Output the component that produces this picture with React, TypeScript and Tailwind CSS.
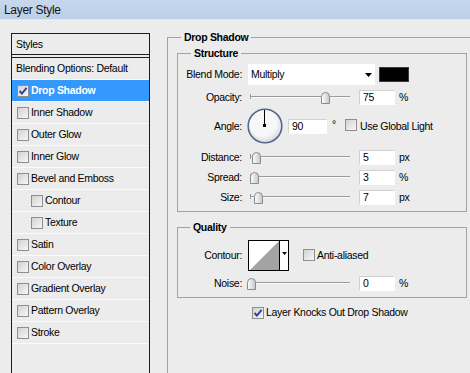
import React from 'react';

const styleRows = [
  { name: 'Blending Options: Default', box: false },
  { name: 'Drop Shadow', checked: true, selected: true },
  { name: 'Inner Shadow' },
  { name: 'Outer Glow' },
  { name: 'Inner Glow' },
  { name: 'Bevel and Emboss' },
  { name: 'Contour', indent: true },
  { name: 'Texture', indent: true },
  { name: 'Satin' },
  { name: 'Color Overlay' },
  { name: 'Gradient Overlay' },
  { name: 'Pattern Overlay' },
  { name: 'Stroke' },
];

function CheckBox({ checked = false }: { checked?: boolean }) {
  return (
    <span className="inline-flex w-[12px] h-[12px] shrink-0 items-center justify-center border border-[#8e8e8e] bg-gradient-to-br from-[#d2d2d2] to-[#f7f7f7]">
      {checked && (
        <svg width="10" height="10" viewBox="0 0 10 10">
          <path d="M1.6 5 L3.9 7.6 L8.6 1.8" fill="none" stroke="#2d3f9c" strokeWidth="1.9" />
        </svg>
      )}
    </span>
  );
}

function Thumb() {
  return (
    <svg width="9" height="12" viewBox="0 0 9 12">
      <defs>
        <linearGradient id="thumbGrad" x1="0" y1="0" x2="1" y2="0">
          <stop offset="0" stopColor="#ffffff" />
          <stop offset="1" stopColor="#c6c6c6" />
        </linearGradient>
      </defs>
      <path d="M0.5 11.5V4.5Q0.5 0.5 4.5 0.5Q8.5 0.5 8.5 4.5V11.5Z" fill="url(#thumbGrad)" stroke="#8a8a8a" />
    </svg>
  );
}

function Slider({ pos }: { pos: number }) {
  return (
    <div className="relative w-[104px] h-[16px] shrink-0">
      <div className="absolute left-[2px] top-[7px] w-[100px] h-[1px] bg-[#9a9a9a]" />
      <div className="absolute left-[2px] top-[8px] w-[100px] h-[1px] bg-[#fafafa]" />
      <div className="absolute left-[2px] top-[5px] w-[1px] h-[5px] bg-[#9a9a9a]" />
      <div className="absolute top-[3px] leading-none" style={{ left: pos - 4.5 }}>
        <Thumb />
      </div>
    </div>
  );
}

function Field({ value, wide = false }: { value: string; wide?: boolean }) {
  return (
    <span
      className={
        wide
          ? 'flex items-center w-[39px] h-[15px] shrink-0 bg-white border border-[#d0d0d0] border-b-white border-r-white pl-[3px]'
          : 'flex items-center w-[36px] h-[15px] shrink-0 bg-white border border-[#d0d0d0] border-b-white border-r-white pl-[3px]'
      }
    >
      {value}
    </span>
  );
}

function SliderRow({ label, pos, value, unit }: { label: string; pos: number; value: string; unit: string }) {
  return (
    <div className="flex items-center h-[16px]">
      <span className="w-[64px] text-right">{label}</span>
      <div className="ml-[6px]">
        <Slider pos={pos} />
      </div>
      <div className="ml-[7px]">
        <Field value={value} />
      </div>
      <span className="ml-[4px]">{unit}</span>
    </div>
  );
}

export default function App() {
  return (
    <div className="w-[470px] h-[373px] overflow-hidden bg-[#ececec] text-black font-['Liberation_Sans',Arial,sans-serif] text-[10.5px] tracking-[-0.3px] leading-none">
      {/* title bar */}
      <div className="h-[20px] flex items-center pl-[4px] bg-gradient-to-b from-[#c7d8ee] to-[#bbcfe7] border-b border-[#dde8f4] text-[12px] text-[#151515]">
        Layer Style
      </div>

      <div className="flex items-start">
        {/* styles list */}
        <div className="ml-[11px] mt-[13px] w-[139px] h-[400px] shrink-0 border border-[#1c1c1c]">
          <div className="h-[21px] flex items-center pl-[4px] border-b border-[#1c1c1c]">Styles</div>
          <div className="h-[3px] border-b border-[#1c1c1c]" />
          {styleRows.map((row) => (
            <div
              key={row.name}
              className={
                row.selected
                  ? 'h-[22px] flex items-center gap-[2px] pl-[5px] border-b border-[#fafafa] bg-[#3399ff] text-white font-bold'
                  : row.indent
                    ? 'h-[22px] flex items-center gap-[2px] pl-[19px] border-b border-[#fafafa]'
                    : row.box === false
                      ? 'h-[22px] flex items-center pl-[4px] border-b border-[#fafafa]'
                      : 'h-[22px] flex items-center gap-[2px] pl-[5px] border-b border-[#fafafa]'
              }
            >
              {row.box !== false && <CheckBox checked={row.checked} />}
              <span>{row.name}</span>
            </div>
          ))}
        </div>

        {/* Drop Shadow group */}
        <fieldset className="ml-[17px] mt-[11px] w-[330px] h-[400px] shrink-0 border border-[#a3a3a3] pl-[9px] pt-[3px]">
          <legend className="ml-[4px] px-[3px] h-[13px] leading-[13px] font-bold">Drop Shadow</legend>

          <fieldset className="w-[290px] border border-[#a3a3a3] pt-[4px] pb-[6px]">
            <legend className="ml-[13px] px-[3px] h-[13px] leading-[13px] font-bold">Structure</legend>

            <div className="flex items-center h-[21px]">
              <span className="w-[64px] text-right">Blend Mode:</span>
              <div className="ml-[6px] w-[127px] h-[21px] flex items-center justify-between pl-[3px] pr-[3px] bg-white">
                <span>Multiply</span>
                <svg width="7" height="4" viewBox="0 0 7 4">
                  <path d="M0 0H7L3.5 4Z" fill="#000" />
                </svg>
              </div>
              <div className="ml-[4px] w-[30px] h-[15px] bg-black border border-[#3a3a3a]" />
            </div>

            <div className="mt-[4px]">
              <SliderRow label="Opacity:" pos={77.5} value="75" unit="%" />
            </div>

            <div className="mt-[3px] flex items-center h-[36px]">
              <span className="w-[64px] text-right">Angle:</span>
              <svg className="ml-[5px] shrink-0" width="36" height="36" viewBox="0 0 36 36">
                <defs>
                  <radialGradient id="dialGrad" cx="0.45" cy="0.4" r="0.6">
                    <stop offset="0.65" stopColor="#f7f7f7" />
                    <stop offset="1" stopColor="#d8d8d8" />
                  </radialGradient>
                </defs>
                <circle cx="18" cy="18" r="16.8" fill="url(#dialGrad)" stroke="#56678f" strokeWidth="1.6" />
                <line x1="17.5" y1="17.5" x2="17.5" y2="2" stroke="#000" strokeWidth="1" />
                <rect x="16" y="16" width="3" height="3" fill="#000" />
              </svg>
              <div className="ml-[5px]">
                <Field value="90" wide />
              </div>
              <span className="ml-[5px] -mt-[4px]">°</span>
              <div className="ml-[9px]">
                <CheckBox />
              </div>
              <span className="ml-[3px]">Use Global Light</span>
            </div>

            <div className="mt-[5px]">
              <SliderRow label="Distance:" pos={8.5} value="5" unit="px" />
            </div>
            <div className="mt-[4px]">
              <SliderRow label="Spread:" pos={6} value="3" unit="%" />
            </div>
            <div className="mt-[4px]">
              <SliderRow label="Size:" pos={10} value="7" unit="px" />
            </div>
          </fieldset>

          <fieldset className="mt-[9px] w-[290px] border border-[#a3a3a3] pt-[6px] pb-[6px]">
            <legend className="ml-[12px] px-[3px] h-[13px] leading-[13px] font-bold">Quality</legend>

            <div className="flex items-center h-[31px]">
              <span className="w-[64px] text-right">Contour:</span>
              <svg className="ml-[6px] shrink-0" width="41" height="31" viewBox="0 0 41 31">
                <rect x="0.5" y="0.5" width="40" height="30" fill="#fff" stroke="#000" />
                <path d="M2 30 L31 1 L31 30 Z" fill="#a3a3a3" />
                <line x1="31.5" y1="0" x2="31.5" y2="31" stroke="#000" />
                <path d="M34 12 H39 L36.5 15 Z" fill="#000" />
              </svg>
              <div className="ml-[14px]">
                <CheckBox />
              </div>
              <span className="ml-[2px]">Anti-aliased</span>
            </div>

            <div className="mt-[4px]">
              <SliderRow label="Noise:" pos={3} value="0" unit="%" />
            </div>
          </fieldset>

          <div className="mt-[8px] flex items-center h-[13px] pl-[75px]">
            <CheckBox checked />
            <span className="ml-[2px]">Layer Knocks Out Drop Shadow</span>
          </div>
        </fieldset>
      </div>
    </div>
  );
}
